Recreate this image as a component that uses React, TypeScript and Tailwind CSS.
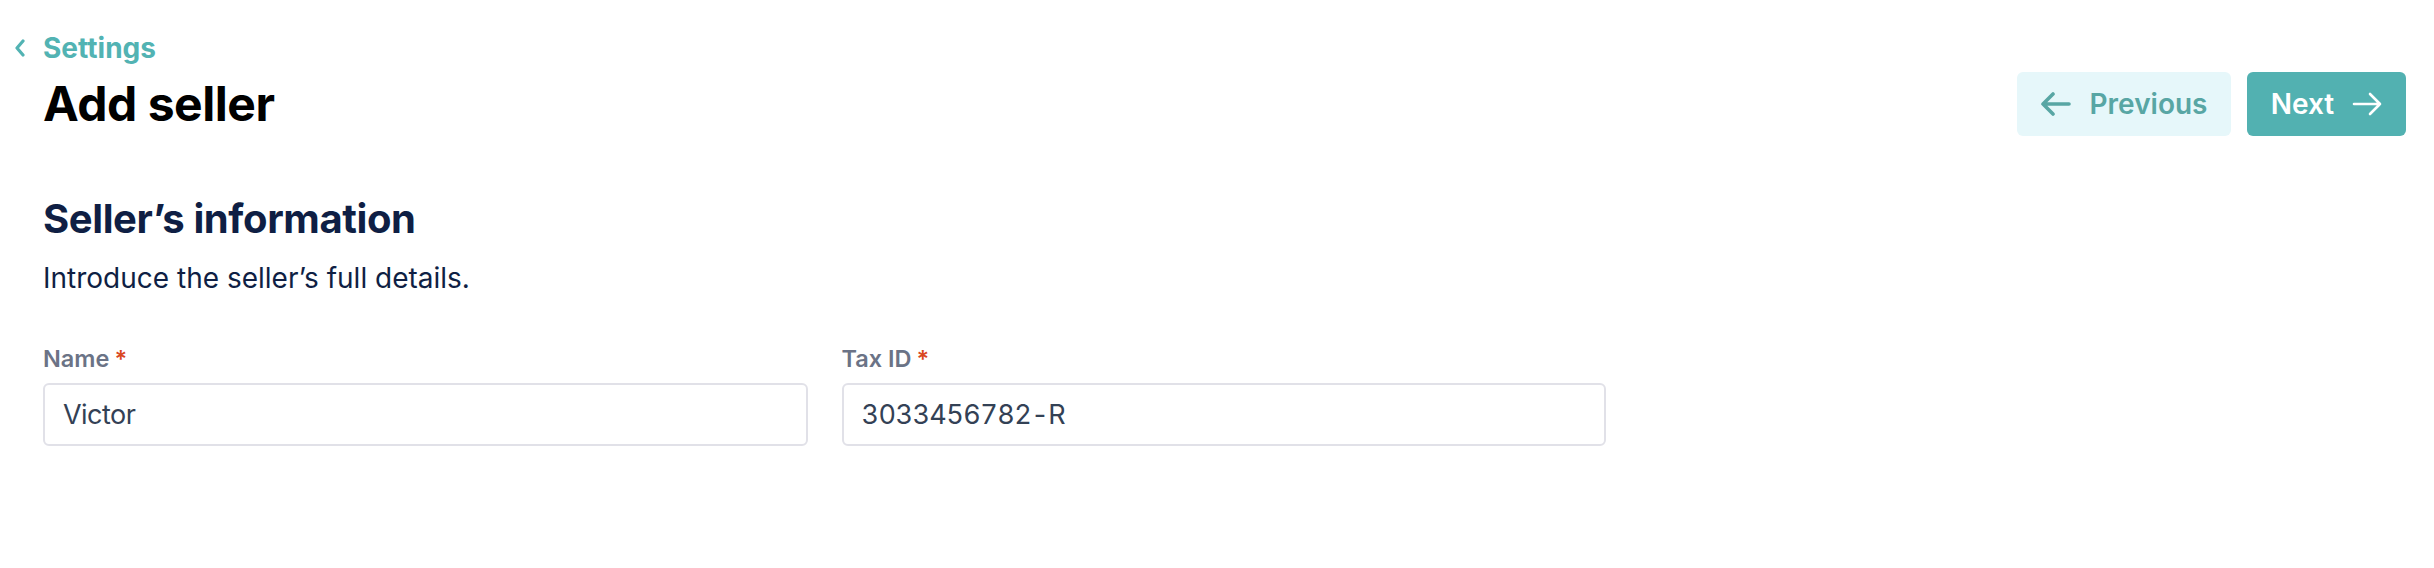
const fields = [
  { label: "Name", value: "Victor" },
  { label: "Tax ID", value: "3033456782-R" },
];

function Arrow({ dir, stroke }: { dir: "left" | "right"; stroke: number }) {
  return (
    <svg
      viewBox="0 0 30 24"
      className={dir === "right" ? "h-[24px] w-[30px] rotate-180" : "h-[24px] w-[30px]"}
      fill="none"
      stroke="currentColor"
      strokeWidth={stroke}
      strokeLinecap="round"
      strokeLinejoin="round"
    >
      <path d="M28 12H2M12 2L2 12l10 10" />
    </svg>
  );
}

export default function App() {
  return (
    <div className="min-h-screen bg-white pl-[43px] pr-[28px] font-['Inter',sans-serif]">
      <header className="pt-[30px]">
        <a
          href="#"
          className="-ml-[29px] flex h-[36px] items-center gap-[17px] text-[28px] leading-[36px] font-bold text-[#52b3b3]"
        >
          <svg
            viewBox="0 0 12 18"
            className="h-[18px] w-[12px]"
            fill="none"
            stroke="currentColor"
            strokeWidth={3.2}
            strokeLinecap="round"
            strokeLinejoin="round"
          >
            <path d="M9 2L3 9l6 7" />
          </svg>
          Settings
        </a>
        <div className="mt-[6px] flex h-[64px] items-center justify-between">
          <h1 className="text-[48px] leading-[56px] font-bold tracking-[-0.01em] text-black">
            Add seller
          </h1>
          <div className="flex gap-[16px]">
            <button className="flex h-[64px] w-[214px] items-center justify-center gap-[19px] rounded-[6px] bg-[#e6f7fa] text-[28px] font-semibold text-[#58a6a4]">
              <Arrow dir="left" stroke={3.6} />
              Previous
            </button>
            <button className="flex h-[64px] w-[159px] items-center justify-center gap-[18px] rounded-[6px] bg-[#52b1b1] text-[28px] font-semibold text-white">
              Next
              <Arrow dir="right" stroke={2.6} />
            </button>
          </div>
        </div>
      </header>

      <section className="mt-[59px]">
        <h2 className="text-[40px] leading-[48px] font-bold tracking-[-0.01em] text-[#0f1f44]">
          Seller’s information
        </h2>
        <p className="mt-[17px] text-[28px] leading-[36px] text-[#0f1f44]">
          Introduce the seller’s full details.
        </p>

        <div className="mt-[49px] grid w-[1563px] grid-cols-2 gap-x-[34px]">
          {fields.map((field) => (
            <label key={field.label} className="block">
              <span className="flex h-[28px] items-center gap-[5px] text-[23.5px] leading-[28px] font-semibold text-[#6b7386]">
                {field.label}
                <span className="text-[#d9471f]">*</span>
              </span>
              <input
                defaultValue={field.value}
                className="mt-[10px] h-[63px] w-full rounded-[6px] border-2 border-[#e1e1e8] px-[18px] text-[27px] tracking-[-0.02em] text-[#334155] tabular-nums outline-none"
              />
            </label>
          ))}
        </div>
      </section>
    </div>
  );
}
